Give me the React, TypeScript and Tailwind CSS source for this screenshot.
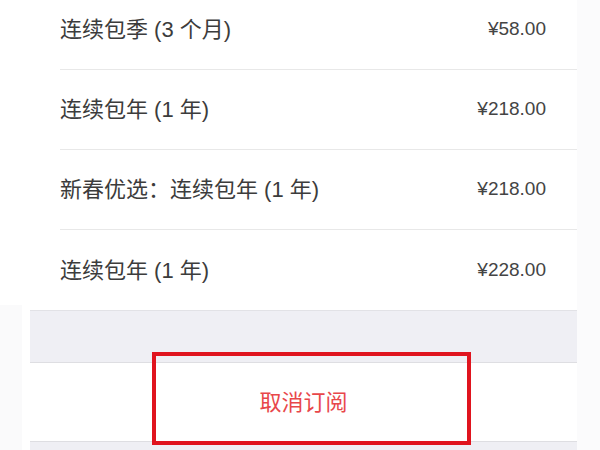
import React from "react";

const rows = [
  { label: "连续包季 (3 个月)", price: "¥58.00" },
  { label: "连续包年 (1 年)", price: "¥218.00" },
  { label: "新春优选：连续包年 (1 年)", price: "¥218.00" },
  { label: "连续包年 (1 年)", price: "¥228.00" },
];

export default function App() {
  return (
    <div
      className="relative w-[600px] h-[450px] overflow-hidden bg-white flex"
      style={{ fontFamily: '"Liberation Sans", "Noto Sans CJK SC", sans-serif' }}
    >
      <div className="w-[30px] shrink-0 flex flex-col">
        <div className="h-[305px]" />
        <div className="flex-1 flex">
          <div className="w-[22px] bg-[#fafafb]" />
          <div className="flex-1 bg-white" />
        </div>
      </div>
      <div className="w-[547px] shrink-0 flex flex-col">
        <div className="-mt-[10px] pl-[30px] bg-white">
          {rows.map((r, i) => (
            <div
              key={i}
              className={
                "h-[80px] flex items-center justify-between pr-[31px] " +
                (i < rows.length - 1 ? "border-b border-[#e8e8e8]" : "")
              }
            >
              <span className="text-[22px] text-[#3c3c3c]">{r.label}</span>
              <span className="text-[19px] text-[#444444]">{r.price}</span>
            </div>
          ))}
        </div>
        <div className="h-[52px] bg-[#efeff4] border-t border-[#e2e2e6]" />
        <div className="h-[80px] bg-white border-y border-[#dedee2] flex items-center justify-center">
          <span className="text-[22px] text-[#e8474a]">取消订阅</span>
        </div>
        <div className="flex-1 bg-[#efeff4]" />
      </div>
      <div className="flex-1 bg-[#fbfbfc]" />
      <div className="absolute left-[152px] top-[352px] w-[319px] h-[93px] border-4 border-[#e0141e]" />
    </div>
  );
}
